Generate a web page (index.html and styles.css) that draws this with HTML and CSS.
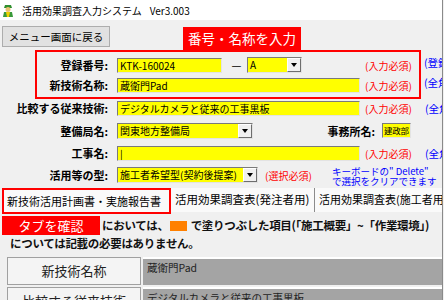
FILE: index.html
```html
<!DOCTYPE html>
<html lang="ja">
<head>
<meta charset="utf-8">
<title>活用効果調査入力システム</title>
<link rel="stylesheet" href="styles.css">
</head>
<body>
<div class="window">
  <header class="titlebar">
    <svg class="app-icon" width="12" height="13" viewBox="0 0 12 13">
      <path d="M3 1 L9 1 L10 4 L2 4 Z" fill="#2f8f2f"/>
      <circle cx="6" cy="5.5" r="2.5" fill="#e8c070"/>
      <path d="M2 8 L10 8 L11 13 L1 13 Z" fill="#3a9a3a"/>
      <path d="M4 8 L8 8 L7 13 L5 13 Z" fill="#f0d000"/>
    </svg>
    <span class="title">活用効果調査入力システム</span>
    <span class="version">Ver3.003</span>
  </header>

  <div class="toolbar">
    <button class="btn">メニュー画面に戻る</button>
    <div class="callout callout-top">番号・名称を入力</div>
  </div>

  <div class="boxed">
    <div class="redbox">
      <div class="row">
        <span class="lbl">登録番号:</span>
        <div class="field">
          <span class="inp w-code">KTK-160024</span>
          <span class="dash">—</span>
          <span class="sel w-a"><span class="sel-val">A</span><span class="arrow"><i></i></span></span>
        </div>
        <span class="req">(入力必須)</span>
      </div>
      <div class="row">
        <span class="lbl">新技術名称:</span>
        <div class="field">
          <span class="inp w-full">蔵衛門Pad</span>
        </div>
        <span class="req">(入力必須)</span>
      </div>
    </div>
    <div class="notes">
      <div class="note">(登録番号は半角で入力)</div>
      <div class="note">(全角で入力)</div>
    </div>
  </div>

  <div class="row free r3">
    <span class="lbl">比較する従来技術:</span>
    <div class="field">
      <span class="inp w-full">デジタルカメラと従来の工事黒板</span>
    </div>
    <span class="req">(入力必須)</span>
    <span class="note">(全角で入力)</span>
  </div>

  <div class="row free r4">
    <span class="lbl">整備局名:</span>
    <div class="field">
      <span class="sel w-bureau"><span class="sel-val">関東地方整備局</span><span class="arrow"><i></i></span></span>
      <span class="lbl lbl-inline">事務所名:</span>
      <span class="inp w-office">建政部</span>
    </div>
  </div>

  <div class="row free r5">
    <span class="lbl">工事名:</span>
    <div class="field">
      <span class="inp w-full caret">|</span>
    </div>
    <span class="req">(入力必須)</span>
    <span class="note">(全角で入力)</span>
  </div>

  <div class="row free r6">
    <span class="lbl">活用等の型:</span>
    <span class="sel w-type"><span class="sel-val">施工者希望型(契約後提案)</span><span class="arrow"><i></i></span></span>
    <span class="req req-sel">(選択必須)</span>
    <span class="note note-2"><span class="nl">キーボードの" Delete"</span><span class="nl">で選択をクリアできます</span></span>
  </div>

  <nav class="tabs">
    <span class="tab tab-active">新技術活用計画書・実施報告書</span>
    <span class="tab tab-2">活用効果調査表(発注者用)</span>
    <span class="tab">活用効果調査表(施工者用)</span>
  </nav>

  <section class="panel">
    <div class="callout callout-tab">タブを確認</div>
    <p class="info">においては、<span class="swatch"></span>で塗りつぶした項目(「施工概要」~「作業環境」)<br>については記載の必要はありません。</p>
    <div class="sheet">
      <div class="sh-head">新技術名称</div>
      <div class="sh-val">蔵衛門Pad</div>
      <div class="sh-head">比較する従来技術</div>
      <div class="sh-val">デジタルカメラと従来の工事黒板</div>
    </div>
  </section>
</div>
</body>
</html>
```

FILE: styles.css
```css
* { box-sizing: border-box; }
html, body { margin: 0; padding: 0; }
body {
  background: #f0f0f0;
  font-family: "Noto Sans CJK JP", "Noto Sans", sans-serif;
  color: #000;
}
.window {
  width: 443px;
  height: 300px;
  overflow: hidden;
  position: relative;
  border-right: 1px solid #8a8a8a;
  background: #f0f0f0;
}

/* title bar */
.titlebar {
  height: 20px;
  background: #fff;
  display: flex;
  align-items: center;
  padding-left: 2px;
  font-size: 10px;
  white-space: nowrap;
}
.app-icon { flex: none; }
.title { margin-left: 8px; }
.version { margin-left: 8px; }

/* toolbar */
.toolbar {
  height: 30px;
  display: flex;
  align-items: flex-start;
}
.btn {
  margin: 6px 0 0 2px;
  width: 108px;
  height: 21px;
  padding: 0;
  background: #e1e1e1;
  border: 1px solid #adadad;
  font-family: inherit;
  font-size: 10.5px;
  color: #000;
  line-height: 19px;
}
.callout {
  background: #ff0000;
  color: #fff;
  text-align: center;
  white-space: nowrap;
}
.callout-top {
  margin: 7px 0 0 73px;
  width: 118px;
  height: 23px;
  line-height: 23px;
  font-size: 13.5px;
}

/* form rows */
.boxed { display: flex; height: 49px; }
.redbox {
  margin-left: 35px;
  width: 386px;
  height: 49px;
  border: 2px solid #ff0000;
  padding-top: 3px;
  flex: none;
}
.notes {
  flex: none;
  margin-left: 3px;
  padding-top: 3px;
  white-space: nowrap;
}
.notes .note { margin-left: 0; height: 20px; line-height: 20px; }

.row {
  display: flex;
  align-items: center;
  height: 20px;
  white-space: nowrap;
}
.lbl {
  flex: none;
  font-weight: bold;
  font-size: 11px;
  text-align: right;
}
.redbox .lbl { width: 71px; }
.free .lbl { width: 108px; }
.field {
  flex: none;
  margin-left: 9px;
  width: 243px;
  display: flex;
  align-items: center;
}
.req {
  flex: none;
  margin-left: 5px;
  width: 51px;
  color: #ff0000;
  font-size: 10px;
}
.note {
  flex: none;
  margin-left: 9px;
  color: #0000ff;
  font-size: 10.5px;
}

.r3 { height: 18px; }
.r4 { height: 27px; }
.r5 { height: 18px; }
.r6 { height: 26px; }

.inp {
  flex: none;
  height: 15px;
  background: #ffff00;
  border: 1px solid;
  border-color: #7a7a7a #e3e3e3 #e3e3e3 #7a7a7a;
  font-size: 10px;
  line-height: 13px;
  padding: 0 2px;
  overflow: hidden;
  white-space: nowrap;
}
.w-code { width: 105px; }
.w-full { width: 243px; }
.w-office {
  width: 29px;
  margin-left: 7px;
  padding: 0 1px;
  font-size: 8.5px;
  letter-spacing: -0.3px;
}
.caret { font-weight: normal; }
.dash {
  flex: none;
  margin-left: 9px;
  width: 11px;
  font-size: 11px;
  text-align: center;
}
.sel {
  flex: none;
  display: flex;
  height: 16px;
  background: #ffff00;
  border: 1px solid;
  border-color: #7a7a7a #e3e3e3 #e3e3e3 #7a7a7a;
  overflow: hidden;
}
.sel-val {
  flex: 1;
  font-size: 10px;
  line-height: 14px;
  padding-left: 2px;
  overflow: hidden;
  white-space: nowrap;
}
.arrow {
  flex: none;
  width: 14px;
  height: 14px;
  background: #f0f0f0;
  border: 1px solid;
  border-color: #fff #6e6e6e #6e6e6e #fff;
  display: flex;
  align-items: center;
  justify-content: center;
}
.arrow i {
  display: block;
  width: 0;
  height: 0;
  border-left: 3.5px solid transparent;
  border-right: 3.5px solid transparent;
  border-top: 4px solid #000;
}
.w-a { margin-left: 5px; width: 55px; }
.w-bureau { width: 136px; }
.lbl-inline { margin-left: 14px; }
.w-type { margin-left: 9px; width: 141px; }
.req-sel { margin-left: 7px; width: 67px; }
.note-2 {
  margin-left: 0;
  padding-top: 2px;
  font-size: 9.5px;
  display: flex;
  flex-direction: column;
}
.nl { display: block; height: 10px; line-height: 10px; }

/* tabs */
.tabs {
  display: flex;
  height: 26px;
  white-space: nowrap;
  font-size: 11px;
  background: #f0f0f0;
}
.tab {
  flex: none;
  height: 24px;
  line-height: 22px;
  padding: 0 4px;
  background: #fafafa;
  border-right: 1px solid #8c8c8c;
}
.tab-2 { width: 144px; font-size: 11.5px; }
.tab-active {
  margin-left: 2px;
  width: 169px;
  height: 26px;
  padding-left: 3px;
  border: 2px solid #ff0000;
}

/* panel */
.panel { position: relative; }
.callout-tab {
  position: absolute;
  left: 2px;
  top: 2px;
  width: 98px;
  height: 19px;
  line-height: 19px;
  font-size: 13px;
}
.info {
  margin: 0;
  padding: 2px 0 0 10px;
  font-size: 11.5px;
  letter-spacing: -0.3px;
  font-weight: bold;
  line-height: 18px;
  text-indent: 92px;
  color: #111;
  white-space: nowrap;
}
.swatch {
  display: inline-block;
  width: 17px;
  height: 10px;
  background: #ff8000;
  vertical-align: -1px;
  margin: 0 4px 0 1px;
}
.sheet {
  margin: 5px 0 0 7px;
  display: grid;
  grid-template-columns: 134px 1fr;
  grid-auto-rows: 28px;
  gap: 2px;
}
.sh-head {
  background: #f4f4f4;
  border: 1px solid #a0a0a0;
  font-size: 13px;
  text-align: center;
  line-height: 26px;
  color: #222;
}
.sh-val {
  background: #a4a4a4;
  border-top: 2px solid #fff;
  font-size: 10.5px;
  line-height: 12px;
  padding: 3px 4px;
  color: #222;
  white-space: nowrap;
}
```
